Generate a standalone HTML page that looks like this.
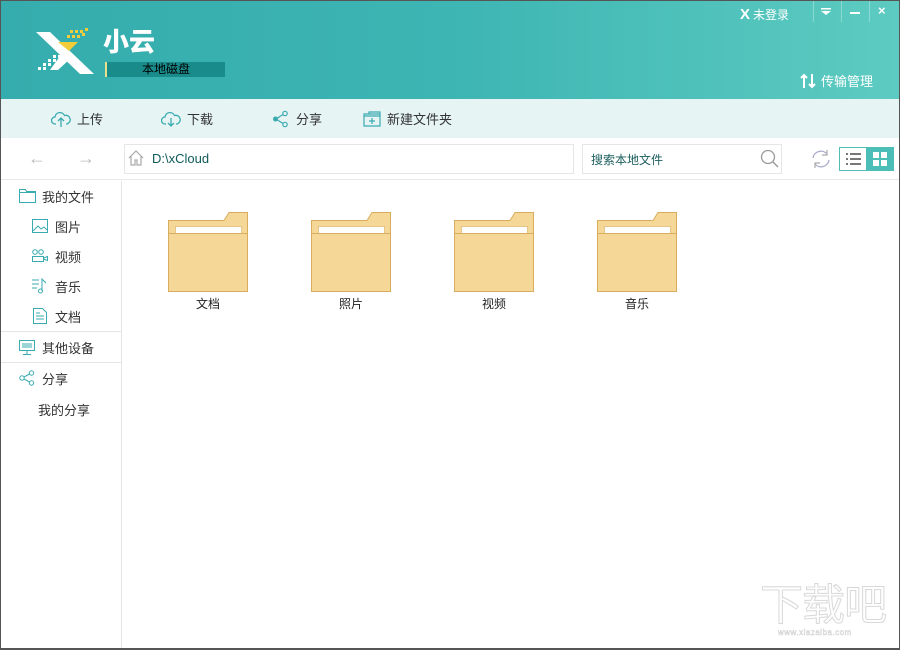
<!DOCTYPE html>
<html><head><meta charset="utf-8"><style>
*{margin:0;padding:0;box-sizing:border-box}
body{width:900px;height:650px;overflow:hidden;font-family:"Liberation Sans","Noto Sans CJK SC",sans-serif;font-size:13px;color:#333;background:#fff;position:relative}
.a{position:absolute}
.hdr{left:0;top:0;width:900px;height:99px;background:linear-gradient(90deg,#35acad 0%,#3db5b3 50%,#5dcbc1 100%)}
.tb{left:0;top:99px;width:900px;height:39px;background:#e6f4f4}
.tbi{top:109px;font-size:13px;color:#333;display:flex;align-items:center;gap:6px}
.nav{left:0;top:138px;width:900px;height:42px;background:#fff;border-bottom:1px solid #e8e8e8}
.side{left:0;top:181px;width:122px;height:469px;border-right:1px solid #e5e5e5;background:#fff}
.si{left:0;width:121px;height:30px;display:flex;align-items:center;font-size:13px;color:#333}
.fl{width:80px;text-align:center;font-size:12px;color:#222}
</style></head><body>
<div class="a hdr"></div>
<svg class="a" style="left:36px;top:26px" width="62" height="50" viewBox="0 0 62 50">
<polygon points="0,6 14,6 58,48 44,48" fill="#fff"/>
<polygon points="27,26 35,32 22,44 14,44" fill="#fff"/>
<polygon points="22,16 42,16 33,25" fill="#f3cc3a"/>
<g fill="#f3cc3a"><rect x="34" y="4" width="3" height="3"/><rect x="39" y="4" width="3" height="3"/><rect x="44" y="4" width="3" height="3"/><rect x="49" y="2" width="3" height="3"/><rect x="31" y="9" width="3" height="3"/><rect x="36" y="9" width="3" height="3"/><rect x="41" y="9" width="3" height="3"/><rect x="46" y="7" width="3" height="3"/></g>
<g fill="#fff"><rect x="2" y="41" width="3" height="3"/><rect x="7" y="41" width="3" height="3"/><rect x="12" y="37" width="3" height="3"/><rect x="7" y="37" width="3" height="3"/><rect x="17" y="33" width="3" height="3"/><rect x="12" y="33" width="3" height="3"/><rect x="22" y="29" width="3" height="3"/><rect x="17" y="29" width="3" height="3"/></g>
</svg>
<div class="a" style="left:103px;top:22px;font-size:26px;font-weight:900;color:#fff;letter-spacing:0px">小云</div>
<div class="a" style="left:105px;top:62px;width:120px;height:15px;background:#1a8b8b;border-left:2px solid #e8e08a;font-size:12px;color:#000;text-align:center;line-height:15px">本地磁盘</div>
<div class="a" style="left:740px;top:6px;color:#fff;font-size:12px;display:flex;align-items:center;gap:3px"><b style="font-size:15px">X</b>未登录</div>
<div class="a" style="left:813px;top:0;width:1px;height:22px;background:rgba(255,255,255,.3)"></div>
<div class="a" style="left:841px;top:0;width:1px;height:22px;background:rgba(255,255,255,.3)"></div>
<div class="a" style="left:869px;top:0;width:1px;height:22px;background:rgba(255,255,255,.3)"></div>
<svg class="a" style="left:820px;top:8px" width="12" height="8"><rect x="1" y="0" width="10" height="1.5" fill="#fff"/><polygon points="1,3 11,3 6,7" fill="#fff"/></svg>
<div class="a" style="left:850px;top:12px;width:10px;height:2px;background:#fff"></div>
<div class="a" style="left:878px;top:3px;color:#fff;font-size:13px;font-weight:bold">×</div>
<div class="a" style="left:800px;top:71px;color:#fff;font-size:13px;display:flex;align-items:center;gap:5px"><svg width="16" height="16"><path d="M4 2v13M1 5l3-3 3 3M12 1v13M9 11l3 3 3-3" stroke="#fff" stroke-width="2" fill="none"/></svg>传输管理</div>
<div class="a tb"></div>
<div class="a tbi" style="left:51px"><svg width="20" height="18"><path d="M5 14H4a3.5 3.5 0 010-7 5 5 0 019.5-1.5A3.5 3.5 0 0116 14h-1M10 17V9M7 11l3-3 3 3" stroke="#3aabb0" stroke-width="1.3" fill="none"/></svg>上传</div>
<div class="a tbi" style="left:161px"><svg width="20" height="18"><path d="M5 14H4a3.5 3.5 0 010-7 5 5 0 019.5-1.5A3.5 3.5 0 0116 14h-1M10 8v8M7 13l3 3 3-3" stroke="#3aabb0" stroke-width="1.3" fill="none"/></svg>下载</div>
<div class="a tbi" style="left:272px"><svg width="18" height="18"><circle cx="3.5" cy="9" r="2.5" fill="#3aabb0"/><circle cx="13" cy="3.5" r="2.2" stroke="#3aabb0" fill="none" stroke-width="1.2"/><circle cx="13" cy="14.5" r="2.2" stroke="#3aabb0" fill="none" stroke-width="1.2"/><path d="M5.5 8L11 4.5M5.5 10L11 13.5" stroke="#3aabb0" stroke-width="1.2"/></svg>分享</div>
<div class="a tbi" style="left:363px"><svg width="18" height="16"><path d="M1 3h16v12H1zM1 5h16M6 3V1h11v2M9 7v6M6 10h6" stroke="#3aabb0" stroke-width="1.2" fill="none"/></svg>新建文件夹</div>
<div class="a nav"></div>
<div class="a" style="left:28px;top:148px;color:#bbb;font-size:18px">←</div>
<div class="a" style="left:77px;top:148px;color:#bbb;font-size:18px">→</div>
<div class="a" style="left:124px;top:144px;width:450px;height:30px;border:1px solid #e6e6e6"></div>
<svg class="a" style="left:128px;top:150px" width="16" height="16"><path d="M1 8L8 1l7 7M3 6v9h4v-5h2v5h4V6" stroke="#aaa" stroke-width="1.2" fill="none"/></svg>
<div class="a" style="left:152px;top:151px;color:#0e5a5a;font-size:13px">D:\xCloud</div>
<div class="a" style="left:582px;top:144px;width:200px;height:30px;border:1px solid #e6e6e6"></div>
<div class="a" style="left:591px;top:151px;color:#1b5d5d;font-size:12px">搜索本地文件</div>
<svg class="a" style="left:760px;top:149px" width="20" height="20"><circle cx="8" cy="8" r="6.5" stroke="#999" stroke-width="1.3" fill="none"/><path d="M13 13l5 5" stroke="#999" stroke-width="1.4"/></svg>
<svg class="a" style="left:810px;top:149px" width="22" height="20"><path d="M3 9a8 8 0 0114-4M19 11a8 8 0 01-14 4" stroke="#aac" stroke-width="1.3" fill="none"/><path d="M17 1v5h-5M5 19v-5h5" stroke="#aaa" stroke-width="1.2" fill="none"/></svg>
<div class="a" style="left:839px;top:147px;width:28px;height:24px;border:1px solid #4dbdb8;background:#fff"></div>
<svg class="a" style="left:846px;top:152px" width="16" height="14"><g fill="#777"><rect x="0" y="1" width="2" height="2"/><rect x="0" y="6" width="2" height="2"/><rect x="0" y="11" width="2" height="2"/><rect x="4" y="1" width="11" height="2"/><rect x="4" y="6" width="11" height="2"/><rect x="4" y="11" width="11" height="2"/></g></svg>
<div class="a" style="left:867px;top:147px;width:27px;height:24px;background:#4dbdb8"></div>
<svg class="a" style="left:873px;top:152px" width="15" height="14"><g fill="#fff"><rect x="0" y="0" width="6" height="6"/><rect x="8" y="0" width="6" height="6"/><rect x="0" y="8" width="6" height="6"/><rect x="8" y="8" width="6" height="6"/></g></svg>
<div class="a side"></div>
<div class="a si" style="top:181px;padding-left:19px"><svg width="17" height="14"><path d="M0.5 0.5h6l1 2h9v11H0.5zM0.5 3.5h16" stroke="#3aabb0" fill="none"/></svg><span style="margin-left:6px">我的文件</span></div>
<div class="a si" style="top:211px;padding-left:32px"><svg width="16" height="14"><rect x=".5" y=".5" width="15" height="13" stroke="#3aabb0" fill="none"/><path d="M1 12l5-5 3 3 3-2 3 3" stroke="#3aabb0" fill="none"/></svg><span style="margin-left:7px">图片</span></div>
<div class="a si" style="top:241px;padding-left:32px"><svg width="16" height="14"><circle cx="3" cy="3" r="2.3" stroke="#3aabb0" fill="none"/><circle cx="9" cy="3" r="2.3" stroke="#3aabb0" fill="none"/><path d="M.5 7.5h11v5H.5zM11.5 9l4-1.5v4l-4-1.5" stroke="#3aabb0" fill="none"/></svg><span style="margin-left:7px">视频</span></div>
<div class="a si" style="top:271px;padding-left:32px"><svg width="16" height="16"><path d="M0 2h7M0 6h7M0 10h5M10 13V1l4 4" stroke="#3aabb0" fill="none"/><circle cx="8.5" cy="13" r="2" stroke="#3aabb0" fill="none"/></svg><span style="margin-left:7px">音乐</span></div>
<div class="a si" style="top:301px;padding-left:33px"><svg width="14" height="16"><path d="M.5.5h9l4 4v11H.5zM3 8h8M3 11h8M3 5h4" stroke="#3aabb0" fill="none"/></svg><span style="margin-left:8px">文档</span></div>
<div class="a" style="left:0;top:331px;width:121px;height:1px;background:#e5e5e5"></div>
<div class="a si" style="top:332px;padding-left:19px"><svg width="16" height="15"><rect x=".5" y=".5" width="15" height="10" stroke="#3aabb0" fill="none"/><rect x="3" y="3" width="10" height="5" fill="#3aabb0" opacity=".5"/><path d="M8 11v3M4 14.5h8" stroke="#3aabb0"/></svg><span style="margin-left:7px">其他设备</span></div>
<div class="a" style="left:0;top:362px;width:121px;height:1px;background:#e5e5e5"></div>
<div class="a si" style="top:363px;padding-left:19px"><svg width="16" height="16"><circle cx="3" cy="8" r="2.2" stroke="#3aabb0" fill="none"/><circle cx="12.5" cy="3" r="2.2" stroke="#3aabb0" fill="none"/><circle cx="12.5" cy="13" r="2.2" stroke="#3aabb0" fill="none"/><path d="M5 7l5.5-3M5 9l5.5 3" stroke="#3aabb0"/></svg><span style="margin-left:7px">分享</span></div>
<div class="a si" style="top:394px;padding-left:38px">我的分享</div>
<svg width="0" height="0" style="position:absolute"><defs><g id="f"><path d="M.5 8.5V79.5H79.5V.5H61l-5 8z" fill="#f5d797" stroke="#d9ad5e"/><rect x="7.5" y="14.5" width="66" height="7" fill="#fff" stroke="#d9ad5e" stroke-width=".6"/><path d="M.5 21.5H79.5" stroke="#d9ad5e"/></g></defs></svg>
<svg class="a" style="left:168px;top:212px" width="80" height="80"><use href="#f"/></svg>
<svg class="a" style="left:311px;top:212px" width="80" height="80"><use href="#f"/></svg>
<svg class="a" style="left:454px;top:212px" width="80" height="80"><use href="#f"/></svg>
<svg class="a" style="left:597px;top:212px" width="80" height="80"><use href="#f"/></svg>
<div class="a fl" style="left:168px;top:295px">文档</div>
<div class="a fl" style="left:311px;top:295px">照片</div>
<div class="a fl" style="left:454px;top:295px">视频</div>
<div class="a fl" style="left:597px;top:295px">音乐</div>
<div class="a" style="left:760px;top:583px;font-size:43px;line-height:46px;font-weight:normal;color:#fff;-webkit-text-stroke:1px #d8d8d8;letter-spacing:-1px">下载吧</div>
<div class="a" style="left:778px;top:628px;font-size:8px;color:#fff;-webkit-text-stroke:.4px #ccc;letter-spacing:.5px">www.xiazaiba.com</div>
<div class="a" style="left:0;top:0;width:900px;height:650px;border:1px solid #555;border-bottom-width:2px;pointer-events:none"></div>
</body></html>
